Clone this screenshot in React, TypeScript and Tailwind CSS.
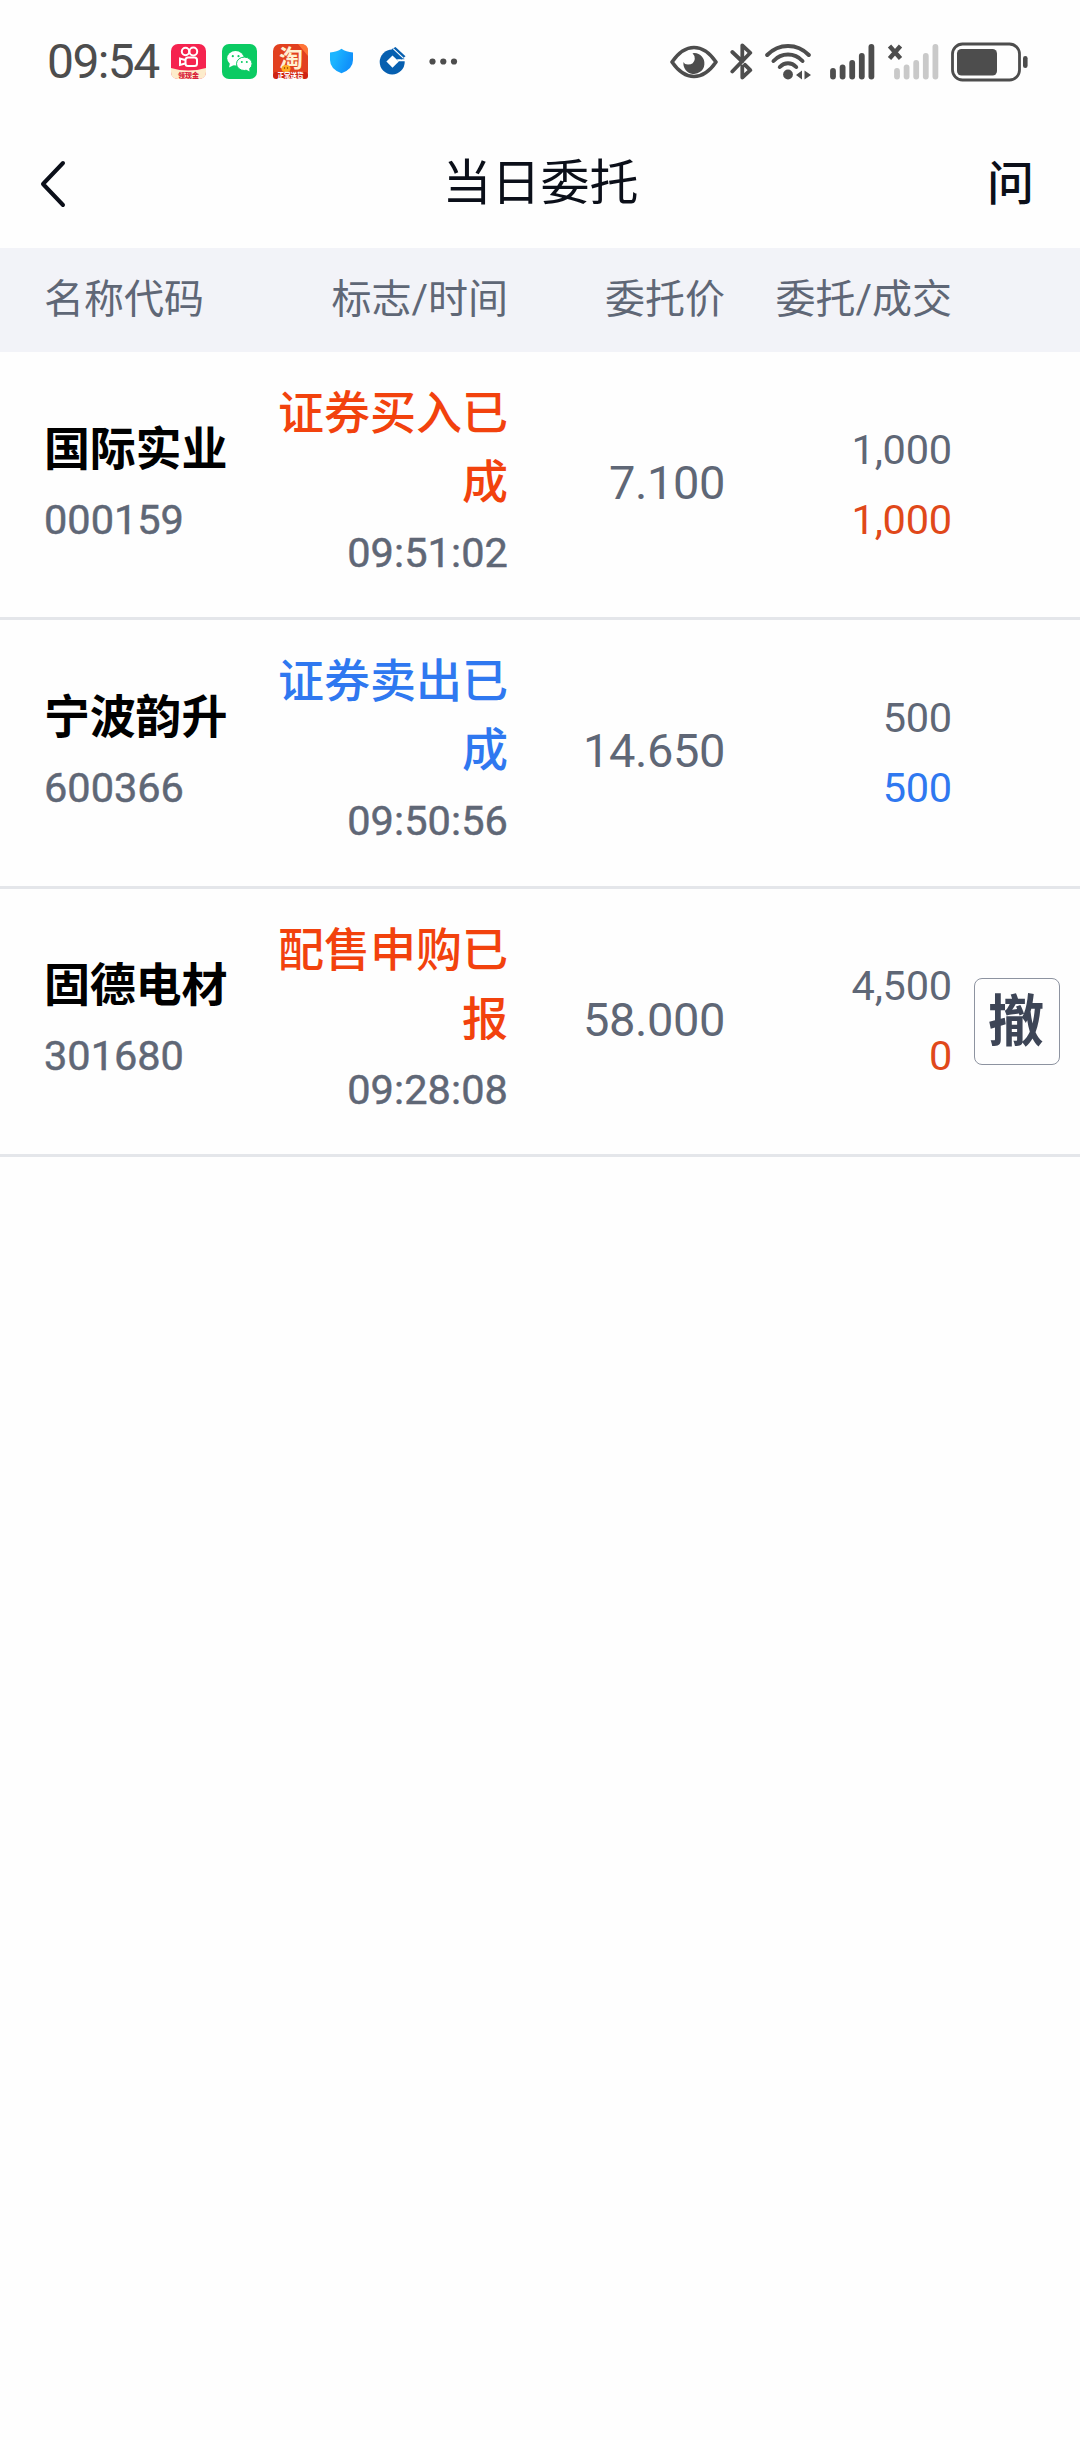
import type { ReactNode } from 'react';

type Order = {
  name: string;
  code: string;
  status: string;
  time: string;
  price: string;
  amount: string;
  filled: string;
  side: 'buy' | 'sell';
  cancelable?: boolean;
};

const orders: Order[] = [
  {
    name: '国际实业',
    code: '000159',
    status: '证券买入已成',
    time: '09:51:02',
    price: '7.100',
    amount: '1,000',
    filled: '1,000',
    side: 'buy',
  },
  {
    name: '宁波韵升',
    code: '600366',
    status: '证券卖出已成',
    time: '09:50:56',
    price: '14.650',
    amount: '500',
    filled: '500',
    side: 'sell',
  },
  {
    name: '固德电材',
    code: '301680',
    status: '配售申购已报',
    time: '09:28:08',
    price: '58.000',
    amount: '4,500',
    filled: '0',
    side: 'buy',
    cancelable: true,
  },
];

// x centre and top of each signal bar
const bars = [
  [3, 24],
  [12.6, 20.5],
  [22.2, 16],
  [31.8, 9],
  [41.4, 0],
];

function AppIcon({ children }: { children: ReactNode }) {
  return (
    <svg width="35" height="35" viewBox="0 0 35 35" className="shrink-0">
      {children}
    </svg>
  );
}

function Signal({ color }: { color: string }) {
  return (
    <svg width="45" height="36" viewBox="0 0 45 36" className="shrink-0" fill={color}>
      {bars.map(([x, y]) => (
        <rect key={x} x={x - 2.9} y={y} width="5.8" height={35.5 - y} rx="2.9" />
      ))}
    </svg>
  );
}

function StatusBar() {
  return (
    <div className="flex h-[123px] items-center pl-[47px] pr-[52px] text-[#4d4d4d]">
      <span className="w-[124px] text-[48px] leading-[56px] tracking-[-1.6px]">09:54</span>

      {/* notification icons */}
      <div className="flex items-center gap-4">
        <AppIcon>
          <rect width="35" height="35" rx="7" fill="#f5234f" />
          <path d="M0 24 Q17 29 35 24 V28 Q35 35 28 35 H7 Q0 35 0 28 Z" fill="#fdeccb" />
          <g fill="none" stroke="#fff" strokeWidth="2">
            <circle cx="14.5" cy="7.5" r="3.7" />
            <circle cx="22.3" cy="7.5" r="3.9" />
            <rect x="14.5" y="13.5" width="11.5" height="8.5" rx="2.5" />
            <path d="M14 16 L9 14.5 V21 L14 19.5" />
          </g>
          <text x="17.5" y="33.7" textAnchor="middle" fontSize="7" fontWeight="900" fill="#d9213a">领现金</text>
        </AppIcon>
        <AppIcon>
          <rect width="35" height="35" rx="7" fill="#0bcb63" />
          <ellipse cx="13.5" cy="14.3" rx="8.3" ry="7.2" fill="#fff" />
          <path d="M8 19 L7 23.5 L12 21Z" fill="#fff" />
          <ellipse cx="22.3" cy="19.8" rx="7.8" ry="6.7" fill="#fff" stroke="#0bcb63" strokeWidth="1" />
          <path d="M24 25.5 L27.5 27.5 L27 23Z" fill="#fff" />
          <g fill="#0bcb63">
            <circle cx="10.8" cy="12.2" r="1.1" />
            <circle cx="16.5" cy="12.2" r="1.1" />
            <circle cx="19.8" cy="18" r="1" />
            <circle cx="24.8" cy="18" r="1" />
          </g>
        </AppIcon>
        <AppIcon>
          <rect width="35" height="35" rx="7" fill="#e2401f" />
          <path d="M25 0 H28 Q35 0 35 7 V12 Z" fill="#ff7436" />
          <rect y="28" width="35" height="7" rx="3" fill="#cf2313" />
          <text x="18" y="22.5" textAnchor="middle" fontSize="24" fontWeight="700" fill="#fff0d2">淘</text>
          <ellipse cx="13" cy="24.5" rx="4.5" ry="3.5" fill="#ffad21" />
          <circle cx="11.5" cy="24" r="0.7" fill="#7b2d06" />
          <circle cx="14.5" cy="24" r="0.7" fill="#7b2d06" />
          <text x="17.5" y="33.7" textAnchor="middle" fontSize="6.5" fontWeight="900" fill="#fff">正常送货</text>
        </AppIcon>
        <AppIcon>
          <defs>
            <linearGradient id="shield" x1="0" x2="1" y1="0.3" y2="0.7">
              <stop offset="0.2" stopColor="#1cb5ff" />
              <stop offset="0.8" stopColor="#1193fb" />
            </linearGradient>
          </defs>
          <path
            d="M17.5 4.8 Q22 8 29 8.5 V16 Q29 25 17.5 29.3 Q6 25 6 16 V8.5 Q13 8 17.5 4.8Z"
            fill="url(#shield)"
          />
        </AppIcon>
        <AppIcon>
          <circle cx="17.2" cy="18" r="12.5" fill="#065fb0" />
          <path d="M17.5 11.5 L23.8 17.6 L17.5 23.7 L11.4 17.6Z" fill="#fff" />
          <path d="M22 15.2 H31 V17.2 H23Z" fill="#fff" />
          <path d="M16.5 5.2 L20.5 3 L30.5 12.2 L26.5 15.4Z" fill="#065fb0" />
          <path d="M18.2 4.6 L28.6 14.4" stroke="#fff" strokeWidth="1.1" />
        </AppIcon>
        <AppIcon>
          <circle cx="6.5" cy="17.5" r="3.1" fill="#4d4d4d" />
          <circle cx="17.3" cy="17.5" r="3.1" fill="#4d4d4d" />
          <circle cx="28" cy="17.5" r="3.1" fill="#4d4d4d" />
        </AppIcon>
      </div>

      {/* system icons */}
      <div className="ml-auto flex items-center">
        <svg width="48" height="34" viewBox="0 0 48 34" fill="none" className="mr-3">
          <path
            d="M2 17 Q12 2.5 24 2.5 Q36 2.5 46 17 Q36 31.5 24 31.5 Q12 31.5 2 17Z"
            stroke="currentColor"
            strokeWidth="3.6"
            strokeLinejoin="round"
          />
          <path
            d="M24.5 8 A10.5 10.5 0 1 1 13.5 17 Q14.5 19.5 18 19.5 Q24 19.5 24.8 14 Q25 10.5 22.5 8.2Z"
            fill="currentColor"
          />
        </svg>
        <svg width="23" height="37" viewBox="0 0 23 37" fill="none" className="mr-3">
          <path
            d="M2.3 9 L12.3 18.5 M12.3 16 V2.3 L20.3 9.8 L2.3 28.5 M12.3 23.5 V34.5 L20.3 27.2 L15 21.8"
            stroke="currentColor"
            strokeWidth="3.8"
            strokeLinecap="round"
            strokeLinejoin="round"
          />
        </svg>
        <svg width="46" height="36" viewBox="0 0 46 36" fill="none" className="mr-[19px]">
          <g stroke="currentColor" strokeWidth="4" strokeLinecap="round">
            <path d="M2.2 11 Q11 2 23 2 Q35 2 43.8 11" />
            <path d="M8.5 17 Q14.5 10.6 23 10.6 Q31.5 10.6 37.5 17" />
            <path d="M14.8 23 Q18.3 19.3 23 19.3 Q27.7 19.3 31.2 23" />
          </g>
          <circle cx="23" cy="30.5" r="4.9" fill="currentColor" />
          <path d="M31 31 L37 26.5 V35.5Z M46 31 L39.5 26.5 V35.5Z" fill="currentColor" />
        </svg>
        <Signal color="#4d4d4d" />
        {/* no-service mark, hangs over the second SIM's bars */}
        <svg width="19" height="36" viewBox="0 0 19 36" className="overflow-visible">
          <path d="M25.5 2 L14.5 14.5 M14.5 2 L25.5 14.5" stroke="currentColor" strokeWidth="4.4" />
        </svg>
        <Signal color="#c9c9c9" />
        <svg width="77" height="40" viewBox="0 0 77 40" fill="none" className="ml-3">
          <rect x="1.5" y="2" width="67" height="36" rx="10" stroke="currentColor" strokeWidth="2.8" />
          <rect x="6" y="7" width="40" height="26.5" rx="4.5" fill="currentColor" />
          <rect x="72" y="14" width="4.6" height="12" rx="2.3" fill="currentColor" />
        </svg>
      </div>
    </div>
  );
}

function NavBar() {
  return (
    <div className="flex h-[125px] items-center justify-between pb-[3px] pl-[40px] pr-[46px] text-[#0b0f19]">
      <svg width="54" height="48" viewBox="0 0 54 48" fill="none">
        <path d="M23 3 L3 24 L23 45" stroke="currentColor" strokeWidth="4" strokeLinecap="round" strokeLinejoin="round" />
      </svg>
      <h1 className="text-[49px] leading-[60px]">当日委托</h1>
      <span className="text-[47px] font-medium leading-[60px]">问</span>
    </div>
  );
}

function OrderRow({ order }: { order: Order }) {
  const buy = order.side === 'buy';
  return (
    <div className="flex h-[268.33px] items-center border-b-[3px] border-[#e4e6ea] text-[#5f6776]">
      <div className="w-[234px] pb-[3px] pl-[44px]">
        <div className="text-[46px] font-bold leading-[72px] tracking-[-0.2px] text-black">{order.name}</div>
        <div className="text-[41.5px] leading-[69px] [-webkit-text-stroke:0.5px]">{order.code}</div>
      </div>
      <div className="w-[274px] pb-[2px] pl-[43px] text-right">
        <div className={`text-[46px] font-medium leading-[69px] break-all ${buy ? 'text-[#f2420d]' : 'text-[#2f78f0]'}`}>
          {order.status}
        </div>
        <div className="text-[41.5px] leading-[71px] tracking-[0.1px] [-webkit-text-stroke:0.5px]">{order.time}</div>
      </div>
      <div className="w-[217px] pb-1 text-right text-[47px] leading-[69px] tracking-[-0.4px]">{order.price}</div>
      <div className="w-[227px] text-right text-[41.5px] leading-[70px] tracking-[-0.2px]">
        <div>{order.amount}</div>
        <div className={buy ? 'text-[#e0481a]' : 'text-[#2f78f0]'}>{order.filled}</div>
      </div>
      {order.cancelable && (
        <button className="ml-[22px] flex h-[87px] w-[86px] items-center justify-center rounded-lg border-[1.5px] border-[#8d93a0] pt-[2px] pr-[2px] text-[56px] font-bold leading-none text-[#3d4556]">
          撤
        </button>
      )}
    </div>
  );
}

export default function App() {
  return (
    <div className="min-h-[2440px] w-[1080px] bg-[#fefefe] font-[Roboto,'Noto_Sans_CJK_SC',sans-serif]">
      <StatusBar />
      <NavBar />

      {/* table head */}
      <div className="flex h-[104px] items-center bg-[#f2f3f8] pb-px text-[40px] text-[#5f6776]">
        <span className="w-[234px] pl-[44px]">名称代码</span>
        <span className="w-[274px] text-right">标志/时间</span>
        <span className="w-[217px] text-right">委托价</span>
        <span className="w-[227px] text-right">委托/成交</span>
      </div>

      {orders.map((order) => (
        <OrderRow key={order.code} order={order} />
      ))}
    </div>
  );
}
